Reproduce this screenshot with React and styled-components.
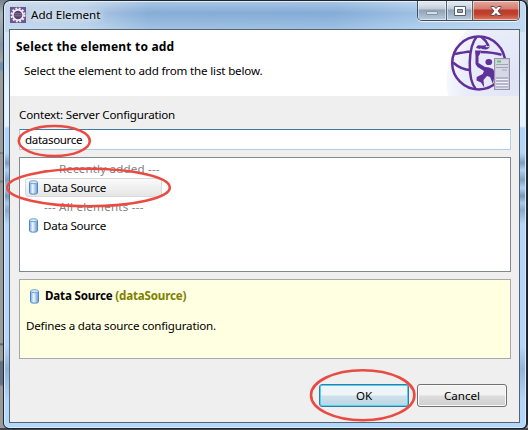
import React from 'react';
import styled, { createGlobalStyle, css } from 'styled-components';

const GlobalStyle = createGlobalStyle`
  * { box-sizing: border-box; }
  body { margin: 0; overflow: hidden; }
`;

const Desktop = styled.div`
  position: relative;
  width: 528px;
  height: 430px;
  padding: 0 0 1px 3px;
  background:
    linear-gradient(#46444a, #46444a) 0 100% / 100% 2px no-repeat,
    linear-gradient(180deg, #77818c 0, #a9b0b8 14px, #8494a6 46px, #a3a4a5 60px 61px, #6c93b4 63px 69px, #9a9c9e 72px 152px, #666 153px, #999 154px 180px, #777 181px, #9b9b9b 184px 343px, #555 344px, #9a9a9a 346px 360px, #65717f 362px 384px, #999 387px);
  font: 12px/16px 'Noto Sans', sans-serif;
  color: #000;
`;

const Window = styled.main`
  display: flex;
  flex-direction: column;
  height: 429px;
  padding: 0 6px 5px 5px;
  border: 1px solid #20252c;
  border-right-width: 2px;
  border-radius: 7px 7px 6px 6px;
  box-shadow: inset 0 0 0 1px #d9ecfb;
  background:
    linear-gradient(180deg, transparent 0 31px, #d5e5f5 31px 60px, #e7f2ff 90px 125px, #b2d6fb 127px 152px, #7f9dbd 162px, #add1f5 169px, #819fc0 179px, #add1f6 187px, #7896b8 195px, #a6c9ed 202px, #8ba9ca 209px, #b3d6fa 223px 345px, #92b4d8 368px, #b3d7fb 400px),
    linear-gradient(90deg, #c5d8eb 0, #bdd2e9 80px, #8fb4db 145px, #8cb2db 330px, #a6c8e9 410px, #c1daf1 100%);
`;

const TitleBar = styled.header`
  display: flex;
  align-items: flex-start;
  height: 28px;
  flex: none;
  padding-left: 1px;
  background: linear-gradient(180deg, rgba(255,255,255,.25) 0, rgba(83,133,185,.14) 12px, rgba(205,229,249,.28) 28px);
`;

const AppIcon = styled.svg`
  width: 16px;
  height: 16px;
  margin-top: 6px;
`;

const Label = styled.span`
  white-space: nowrap;
  font-size: ${({ $size }) => $size || 11.6}px;
  font-weight: ${({ $bold }) => ($bold ? 700 : 400)};
  letter-spacing: ${({ $track }) => $track || 0}px;
  color: ${({ $color }) => $color || 'inherit'};
`;

const Title = styled.h1`
  flex: 1;
  margin: 6px 0 0 5px;
  font: inherit;
  line-height: 16px;
  text-shadow: 0 0 7px #fff, 0 0 9px #fff;
`;

const Controls = styled.div`
  display: flex;
  height: 20px;
  border: 1px solid #414c5b;
  border-top: 0;
  border-radius: 0 0 5px 5px;
  box-shadow: 0 1px 1px #edf7ff;
  overflow: hidden;
`;

const tones = {
  blue: css`background: linear-gradient(#dce4ec 0 3px, #bfcbd7 8px, #8fa2b6 9px, #b9cbdc 100%);`,
  red: css`background: linear-gradient(#e7a89d 0, #d77c6e 8px, #b83d2c 9px, #bf412c 13px, #df7961 100%);`,
};

const ControlButton = styled.button`
  display: grid;
  place-items: center;
  width: ${({ $width }) => $width}px;
  padding: 0;
  border: 0;
  box-shadow: inset 0 0 0 1px rgba(255,255,255,.5);
  ${({ $tone }) => tones[$tone]}
  & + & { border-left: 1px solid #536171; }
  svg { display: block; }
`;

const Client = styled.section`
  flex: 1;
  display: flex;
  flex-direction: column;
  border: 1px solid #58636f;
  background: #efefef;
`;

const Banner = styled.div`
  display: flex;
  justify-content: space-between;
  height: 66px;
  flex: none;
  background:
    radial-gradient(ellipse 73px 76px at 100% 78%, #dfe4f6 0, #e9edf9 75%, #f5f7fd 98%, transparent 100%),
    #fff;
`;

const BannerText = styled.div`
  display: flex;
  flex-direction: column;
  padding: 9px 0 0 6px;
  gap: 8px;
  p { margin: 0 0 0 8px; }
  h2 { margin: 0; font: inherit; line-height: 16px; }
`;

const BannerLogo = styled.svg`
  width: 64px;
  height: 62px;
  margin: 2px 7px 0 0;
`;

const Body = styled.div`
  display: flex;
  flex-direction: column;
  padding: 11px 8px 0 9px;
`;

const SearchField = styled.div`
  height: 21px;
  margin-top: 6px;
  padding: 2px 5px;
  border: 1px solid #b1d0e5;
  border-top-color: #3c7ba8;
  border-radius: 1px;
  background: #fff;
`;

const ElementList = styled.div`
  height: 115px;
  margin-top: 7px;
  padding: 1px 5px;
  border: 1px solid #828790;
  background: #fff;
`;

const Row = styled.div`
  display: flex;
  align-items: center;
  width: 137px;
  height: 19px;
  padding-left: ${({ $group }) => ($group ? 18 : 2)}px;
  gap: 4px;
  border: 1px solid transparent;
  border-radius: 3px;
  ${({ $selected }) => $selected && css`
    border-color: #d9d9d9;
    background: linear-gradient(#fafafa, #e6e6e6);
  `}
`;

const Cylinder = styled.svg`
  width: 11px;
  height: 15px;
  flex: none;
`;

const Details = styled.div`
  height: 80px;
  margin-top: 7px;
  padding: 8px 6px;
  border: 1px solid #a7a8ac;
  background: #ffffe1;
  p { margin: 14px 0 0; }
`;

const DetailsHeading = styled.div`
  display: flex;
  align-items: center;
  height: 16px;
  padding-left: 3px;
  gap: 5px;
`;

const Actions = styled.div`
  display: flex;
  justify-content: flex-end;
  gap: 8px;
  margin: 25px 4px 0 0;
`;

const ActionButton = styled.button`
  width: 90px;
  height: 23px;
  padding: 0;
  border: 1px solid ${({ $primary }) => ($primary ? '#397b9f' : '#707070')};
  border-radius: 3px;
  box-shadow: inset 0 0 0 1px ${({ $primary }) => ($primary ? '#45d5fb' : '#fafafa')};
  background: ${({ $primary }) => ($primary
    ? 'linear-gradient(#edf5f9 0 48%, #cfe1eb 52%, #bdd5e2)'
    : 'linear-gradient(#f2f2f2 0 48%, #dddddd 52%, #cfcfcf)')};
  font: inherit;
  line-height: 20px;
  color: #000;
`;

const Annotations = styled.svg`
  position: absolute;
  inset: 0;
  width: 528px;
  height: 430px;
  pointer-events: none;
  fill: none;
  stroke: #e94b43;
  stroke-width: 2.6;
`;

function DataSourceIcon() {
  return (
    <Cylinder viewBox="0 0 11 15">
      <defs>
        <linearGradient id="metal">
          <stop stopColor="#6fa6dd" />
          <stop offset=".4" stopColor="#f1f6ff" />
          <stop offset="1" stopColor="#5b99d7" />
        </linearGradient>
      </defs>
      <path d="M1.5 2v10.8c0 1.8 8 1.8 8 0V2" fill="url(#metal)" stroke="#4a87c6" />
      <ellipse cx="5.5" cy="2.2" rx="4" ry="1.5" fill="#d9eafd" stroke="#6ca0d5" />
    </Cylinder>
  );
}

function EclipseIcon() {
  return (
    <AppIcon viewBox="0 0 16 16">
      <rect width="16" height="16" fill="#6d5492" />
      <circle cx="8" cy="8" r="6.5" fill="none" stroke="#f0edf3" strokeWidth="2" strokeDasharray="1.9 1.5" />
      <circle cx="8" cy="8" r="5.1" fill="#57446e" stroke="#f3f0f4" strokeWidth="1.6" />
      <path d="M4.3 6.8h7.4M4.3 8.8h7.4" stroke="#85779a" />
    </AppIcon>
  );
}

function GlobeServer() {
  return (
    <BannerLogo viewBox="0 0 64 62">
      <g fill="none" stroke="#60309b" strokeWidth="2.5">
        <circle cx="30.7" cy="31" r="26.5" />
        <path d="M29 4.5C20 14 19 47 28 57.5M7 22c5-1 10-2 16-2.5M32.5 20c8 .2 14 .6 21 2.8M5 30.5c5 4.5 11 7.3 18 7.8M33 4.5c4 3 6 6 7.6 9.5" />
      </g>
      <g fill="#60309b">
        <path d="M27 18.5h6l-1.5 4.5-1 1v7l6.5 4 4 .5 4 1.5 2 4-2 11-3-7-3-1-3.5 4 .7 7.5-3.2-5-4.5-2 .2-3.5 6-3 1.3-3-6.5-4-2-3v-8z" />
        <ellipse cx="40.8" cy="30" rx="3.4" ry="3.1" />
        <path d="M28 16c2-6 6 0 11-4-1 5-6 3-7 5zm5 1c3-4 6 0 9-3-2 5-5 3-9 3z" />
      </g>
      <rect x="46.5" y="26.5" width="15" height="31" fill="#c9cada" stroke="#9394aa" />
      <path d="M48 28h12v17H48z" fill="#d7d8e5" />
      <path d="M49 29.5h4" stroke="#59c967" strokeWidth="2" />
      <path d="M48 32.5h12M48 35.5h12M54 38h5" stroke="#a3a4b9" />
      <path d="M48 47.5h12M48 50.5h12M48 53.5h12M48 56h12" stroke="#f2f2f8" />
      <path d="M48 46h12M48 49h12M48 52h12M48 55h12" stroke="#9fa1bb" />
    </BannerLogo>
  );
}

export default function App() {
  return (
    <>
      <GlobalStyle />
      <Desktop>
        <Window>
          <TitleBar>
            <EclipseIcon />
            <Title><Label>Add Element</Label></Title>
            <Controls>
              <ControlButton $width={28} $tone="blue" aria-label="Minimize">
                <svg width="14" height="14" viewBox="0 0 14 14"><path d="M1.5 7.5h11v3h-11z" fill="#d8dee4" stroke="#8795a4" /></svg>
              </ControlButton>
              <ControlButton $width={26} $tone="blue" aria-label="Maximize">
                <svg width="14" height="14" viewBox="0 0 14 14"><path d="M1.5 2.5h11v9h-11zM4.5 5.5v3h5v-3z" fill="#fff" fillRule="evenodd" stroke="#59636f" /></svg>
              </ControlButton>
              <ControlButton $width={47} $tone="red" aria-label="Close">
                <svg width="14" height="14" viewBox="0 0 14 14"><path d="M2 2.5h3l2 2 2-2h3v1L9 7l3 3.5v1H9l-2-2-2 2H2v-1L5 7 2 3.5z" fill="#fff" stroke="#5d4b54" /></svg>
              </ControlButton>
            </Controls>
          </TitleBar>
          <Client>
            <Banner>
              <BannerText>
                <h2><Label $bold $size={12} $track={0.2}>Select the element to add</Label></h2>
                <p><Label $track={-0.17}>Select the element to add from the list below.</Label></p>
              </BannerText>
              <GlobeServer />
            </Banner>
            <Body>
              <Label $track={-0.19}>Context: Server Configuration</Label>
              <SearchField><Label $track={-0.35}>datasource</Label></SearchField>
              <ElementList>
                <Row $group><Label $color="#838383" $track={0.17}>--- Recently added ---</Label></Row>
                <Row $selected><DataSourceIcon /><Label $track={-0.25}>Data Source</Label></Row>
                <Row $group><Label $color="#838383" $track={0.22}>--- All elements ---</Label></Row>
                <Row><DataSourceIcon /><Label $track={-0.25}>Data Source</Label></Row>
              </ElementList>
              <Details>
                <DetailsHeading>
                  <DataSourceIcon />
                  <Label $bold $track={-0.18}>Data Source <Label $bold $track={-0.18} $color="#808000">(dataSource)</Label></Label>
                </DetailsHeading>
                <p><Label $track={-0.2}>Defines a data source configuration.</Label></p>
              </Details>
              <Actions>
                <ActionButton $primary><Label>OK</Label></ActionButton>
                <ActionButton><Label>Cancel</Label></ActionButton>
              </Actions>
            </Body>
          </Client>
        </Window>
        <Annotations viewBox="0 0 528 430">
          <ellipse cx="54.3" cy="141" rx="35.5" ry="15" />
          <ellipse cx="88.5" cy="187.5" rx="81.3" ry="18.7" />
          <ellipse cx="362.7" cy="395.2" rx="51.7" ry="25" />
        </Annotations>
      </Desktop>
    </>
  );
}
